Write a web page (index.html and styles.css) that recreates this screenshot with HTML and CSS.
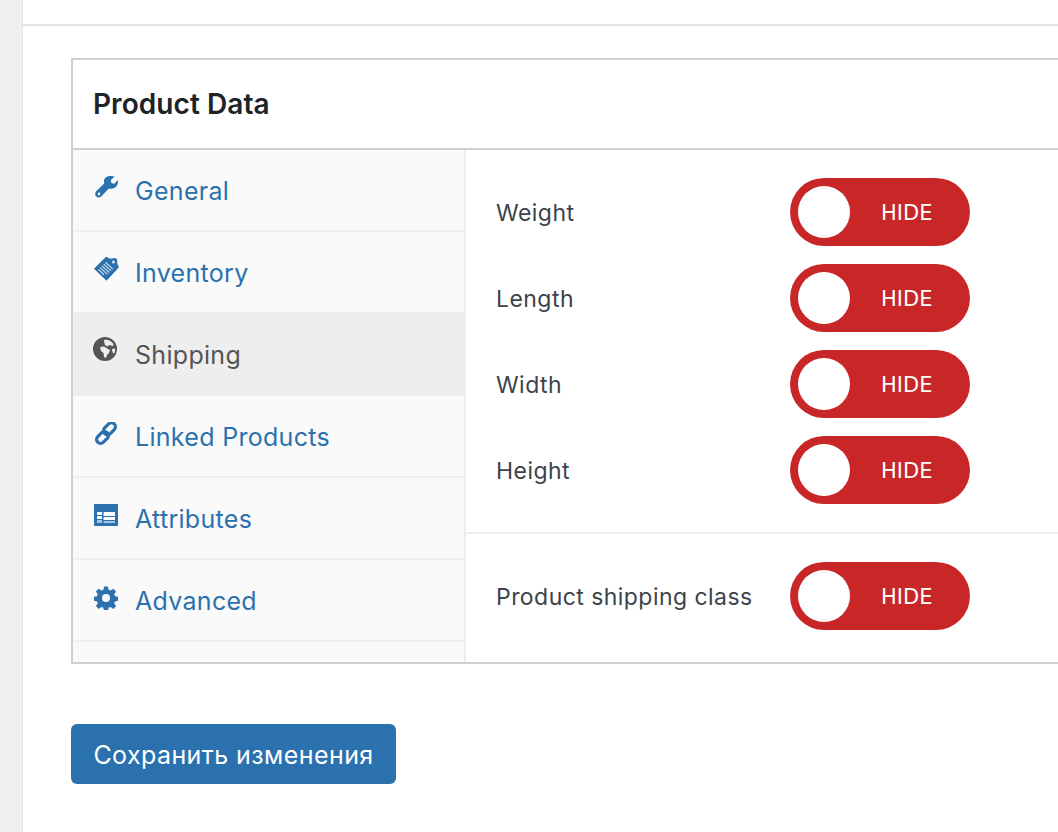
FILE: index.html
```html
<!DOCTYPE html>
<html lang="ru">
<head>
<meta charset="utf-8">
<title>Product Data</title>
<link rel="stylesheet" href="styles.css">
</head>
<body>
<main class="page">
  <div class="top-strip"></div>
  <section class="panel">
    <h2 class="panel-title">Product Data</h2>
    <div class="panel-body">
      <nav class="tabs">
        <a class="tab tab-h82">
          <svg class="ico" viewBox="0 0 24 24"><path fill-rule="evenodd" d="M20.500.6L16.800 4.200l.6 2.800 2.800.7 3.500-3.600c.6 2.400 0 4.800-1.800 6.600-2 2-4.700 2.500-7 1.800L7.500 20.200c-1.600 1.600-3.900 1.600-5.300.2s-1.400-3.700.2-5.300l7.800-7.500c-.7-2.300-.2-4.900 1.800-6.300 2-1.800 5.800-1.600 8.500-.7zM5 16.600a1.300 1.300 0 1 0 0 2.600 1.300 1.300 0 0 0 0-2.600z"/></svg>
          <span>General</span>
        </a>
        <a class="tab tab-h80">
          <svg class="ico ico-tag" viewBox="0 0 24 24"><path d="M11.500.8l4.300 1.900 3.900-.8c1.300-.2 2.300.6 2.400 1.800l.3 3.800 1.600 3.400L12 23.800 0 12.200 11.500.8z"/><path class="tag-lines" d="M11 6l7 6.600M9.300 7.700l7 6.600M7.600 9.400l7 6.600M5.900 11.100l7 6.600M4.200 12.800l5.500 5.200"/><circle class="tag-hole" cx="18.700" cy="5.800" r="1.500"/></svg>
          <span>Inventory</span>
        </a>
        <a class="tab tab-h84 active">
          <svg class="ico ico-globe" viewBox="0 0 24 24"><path fill-rule="evenodd" d="M12 0a12 12 0 1 1 0 24 12 12 0 0 1 0-24zM11 3l.2 2.300.8 2.700 2.500 1.500L16 8l4 1 .5-2C18 3.500 14 2 11 3zM7 10l1 4 2.500 2 .5 4 2 1 1-3 2-2 1-3-2-1-4-2.500L7 10zm12 2l.5 3 1.500 2c.8-1.500 1.300-3.500 1-5.500L19 12z"/></svg>
          <span>Shipping</span>
        </a>
        <a class="tab tab-h81">
          <svg class="ico" viewBox="0 0 24 24"><rect class="chain" x="1.800" y="11.500" width="13.500" height="8" rx="4" transform="rotate(-45 8.500 15.500)"/><rect class="chain" x="8.700" y="2.700" width="13.500" height="8" rx="4" transform="rotate(-45 15.500 6.700)"/></svg>
          <span>Linked Products</span>
        </a>
        <a class="tab tab-h81">
          <svg class="ico" viewBox="0 0 24 24"><path fill-rule="evenodd" d="M1 0h22c.6 0 1 .4 1 1v20c0 .6-.4 1-1 1H1c-.6 0-1-.4-1-1V1c0-.6.4-1 1-1zM3 8v3h5V8H3zm0 4v3h5v-3H3zm6.500-4v4H21V8H9.500zm0 5v3H21v-3H9.500z"/><path class="attr-row" d="M3 16h5v3H3zM9.500 17H21v2H9.500z"/></svg>
          <span>Attributes</span>
        </a>
        <a class="tab tab-h82">
          <svg class="ico" viewBox="0 0 24 24"><path fill-rule="evenodd" d="M10 .5h4l.6 3.300 1.900.8 2.800-1.900 2.800 2.800-1.900 2.800.8 1.900 3.300.6v4l-3.300.6-.8 1.900 1.900 2.800-2.800 2.800-2.800-1.900-1.900.8-.6 3.300h-4l-.6-3.300-1.900-.8-2.800 1.900-2.800-2.800 1.900-2.800-.8-1.900-3.300-.6v-4l3.300-.6.8-1.900-1.900-2.800 2.800-2.800 2.800 1.900 1.900-.8L10 .5zM12 8a4 4 0 1 0 0 8 4 4 0 0 0 0-8z"/></svg>
          <span>Advanced</span>
        </a>
      </nav>
      <div class="fields">
        <div class="field-group">
          <div class="field"><span class="label">Weight</span><span class="toggle"><i class="knob"></i><b class="state">HIDE</b></span></div>
          <div class="field"><span class="label">Length</span><span class="toggle"><i class="knob"></i><b class="state">HIDE</b></span></div>
          <div class="field"><span class="label">Width</span><span class="toggle"><i class="knob"></i><b class="state">HIDE</b></span></div>
          <div class="field"><span class="label">Height</span><span class="toggle"><i class="knob"></i><b class="state">HIDE</b></span></div>
        </div>
        <div class="field-group last">
          <div class="field"><span class="label">Product shipping class</span><span class="toggle"><i class="knob"></i><b class="state">HIDE</b></span></div>
        </div>
      </div>
    </div>
  </section>
  <button class="save" type="button">Сохранить изменения</button>
</main>
</body>
</html>
```

FILE: styles.css
```css
* { box-sizing: border-box; }
html, body { margin: 0; height: 100%; overflow: hidden; }
body {
  background: #f0f0f0;
  font-family: Inter, "Noto Sans", sans-serif;
  padding-left: 22px;
}
.page {
  background: #fff;
  border-left: 1px solid #e2e4e7;
  height: 832px;
  width: 1036px;
  overflow: hidden;
}
.top-strip {
  height: 26px;
  border-bottom: 2px solid #e2e4e7;
}
.panel {
  margin: 32px 0 0 48px;
  width: 1100px;
  border: 2px solid #ccd0d4;
}
.panel-title {
  margin: 0;
  height: 88px;
  padding-left: 20px;
  display: flex;
  align-items: center;
  font-size: 28px;
  font-weight: 600;
  letter-spacing: .06px;
  color: #1d2327;
}
.panel-body {
  display: flex;
  border-top: 2px solid #ccd0d4;
  height: 514px;
}
.tabs {
  width: 393px;
  background: #fafafa;
  border-right: 2px solid #eee;
  display: flex;
  flex-direction: column;
}
.tab {
  display: flex;
  align-items: flex-start;
  gap: 17px;
  padding-left: 21px;
  color: #2a71ae;
  font-size: 25px;
  line-height: 30px;
  letter-spacing: .3px;
  border-bottom: 2px solid #f0f0f0;
}
.tab-h82 { height: 82px; padding-top: 26px; }
.tab-h80 { height: 80px; padding-top: 26px; border-bottom: 0; }
.tab-h84 { height: 84px; padding-top: 28px; border-bottom: 0; }
.tab-h81 { height: 82px; padding-top: 26px; }
.tab.active { background: #eee; color: #555; }
.ico { width: 24px; height: 24px; flex: none; fill: currentColor; }
.ico-tag { margin-top: -2px; height: 25px; width: 25px; margin-right: -1px; }
.ico-globe { margin-top: -3px; margin-left: -1px; margin-right: 1px; }
.tag-lines { fill: none; stroke: #d5e3ef; stroke-width: 1; }
.tag-hole { fill: #d5e3ef; }
.attr-row { fill: #a9c6de; }
.chain { fill: none; stroke: currentColor; stroke-width: 3.200; }
.fields { flex: 1; }
.field-group { padding: 28px 0 28px 30px; display: flex; flex-direction: column; gap: 18px; border-bottom: 2px solid #eee; }
.field-group.last { border-bottom: 0; }
.field { display: flex; align-items: center; height: 68px; }
.label { width: 294px; padding-top: 2px; font-size: 23px; color: #3c434a; letter-spacing: .45px; }
.toggle {
  width: 180px;
  height: 68px;
  border-radius: 34px;
  background: #c92628;
  display: flex;
  align-items: center;
  padding-left: 8px;
}
.knob { width: 52px; height: 52px; border-radius: 50%; background: #fff; flex: none; }
.state { margin: 2px 0 0 31px; color: #fff; font-family: "DejaVu Sans", sans-serif; font-weight: 400; font-size: 21px; }
.save {
  display: block;
  margin: 60px 0 0 48px;
  width: 325px;
  height: 60px;
  padding: 2px 0 0;
  background: #2a71ae;
  color: #fff;
  border: 0;
  border-radius: 6px;
  font-family: Inter, "Noto Sans", sans-serif;
  font-size: 25px;
  font-weight: 400;
  letter-spacing: .42px;
}
```
